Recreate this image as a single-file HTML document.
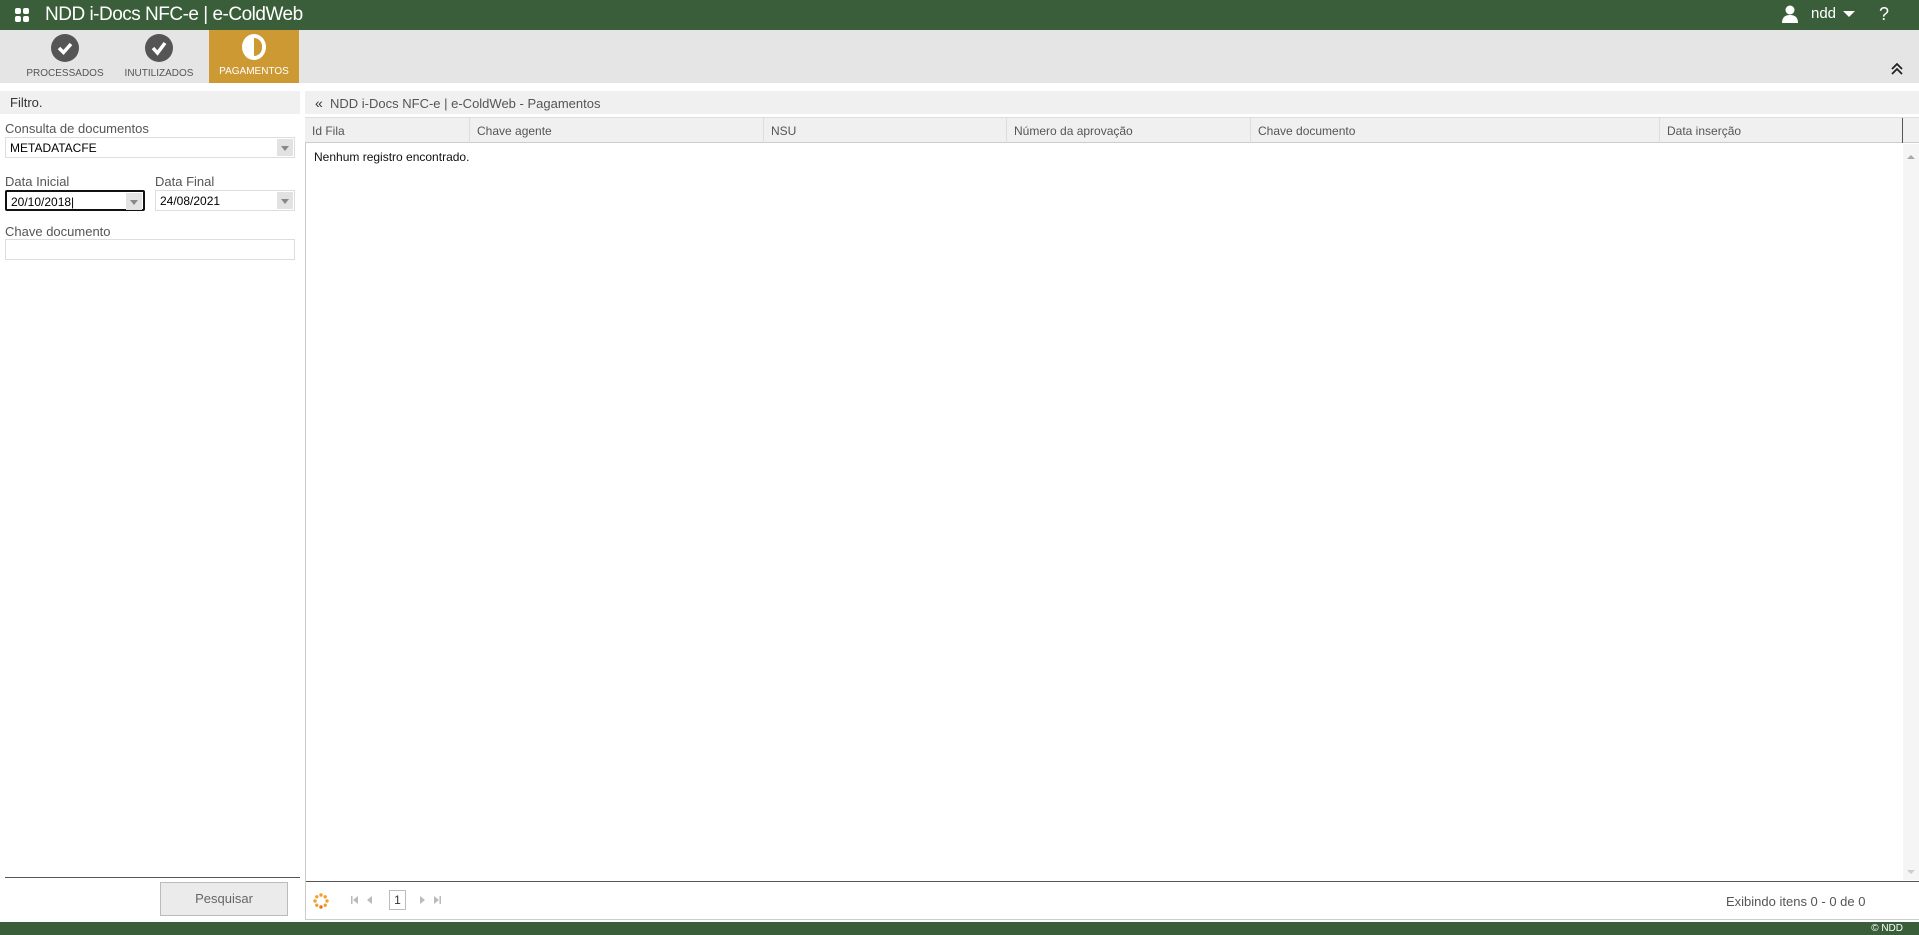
<!DOCTYPE html>
<html><head><meta charset="utf-8"><style>
*{box-sizing:border-box;margin:0;padding:0}
body{width:1919px;height:935px;overflow:hidden;font-family:"Liberation Sans",sans-serif;background:#fff;position:relative;font-size:12px;color:#333}
.a{position:absolute}
.hdr{left:0;top:0;width:1919px;height:30px;background:#3a5e39;color:#fff}
.tb{left:0;top:30px;width:1919px;height:53px;background:#e5e5e5}
.tab{top:0;height:53px;width:90px;text-align:center;font-size:10px;color:#555}
.ic{width:28px;height:28px;border-radius:50%;background:#555;margin:4px auto 6px;position:relative}
.lbl{font-size:13px;color:#555}
.inp{border:1px solid #ddd;height:21px;font-size:12px;color:#000;padding:3px 4px}
.dd{position:absolute;right:1px;top:1px;width:16px;height:17px;background:#e2e2e2}
.dd:after{content:"";position:absolute;left:4px;top:7px;border:4px solid transparent;border-top:5px solid #888}
.th{top:117px;height:26px;background:#f0f0f0;border-top:1px solid #ddd;border-bottom:1px solid #ccc}
.col{position:absolute;top:0;height:25px;border-left:1px solid #ddd;padding:6px 7px;font-size:12px;color:#555}
</style></head><body>
<div class="a hdr">
 <svg class="a" style="left:15px;top:8px" width="14" height="14"><rect x="0" y="0" width="6" height="6" rx="2" fill="#fff"/><rect x="8" y="0" width="6" height="6" rx="2" fill="#fff"/><rect x="0" y="8" width="6" height="6" rx="2" fill="#fff"/><rect x="8" y="8" width="6" height="6" rx="2" fill="#fff"/></svg>
 <div class="a" style="left:45px;top:4px;font-size:19px;letter-spacing:-0.5px">NDD i-Docs NFC-e | e-ColdWeb</div>
 <svg class="a" style="left:1781px;top:5px" width="18" height="18"><circle cx="9" cy="5" r="4.5" fill="#fff"/><path d="M1 18 Q1 10 9 10 Q17 10 17 18Z" fill="#fff"/></svg>
 <div class="a" style="left:1811px;top:5px;font-size:15px">ndd</div>
 <div class="a" style="left:1843px;top:11px;border:6px solid transparent;border-top:6px solid #fff"></div>
 <div class="a" style="left:1879px;top:4px;font-size:18px">?</div>
</div>
<div class="a tb">
 <div class="a tab" style="left:20px"><div class="ic"><svg width="28" height="28"><path d="M8 14 L12.5 18.5 L20 10" stroke="#fff" stroke-width="3.5" fill="none"/></svg></div>PROCESSADOS</div>
 <div class="a tab" style="left:114px"><div class="ic"><svg width="28" height="28"><path d="M8 14 L12.5 19 L20 9" stroke="#fff" stroke-width="3.5" fill="none"/></svg></div>INUTILIZADOS</div>
 <div class="a tab" style="left:209px;width:90px;background:#cc9933;color:#fff"><div class="ic" style="background:#fff;width:24px;height:26px;border-radius:50%"><div style="position:absolute;left:12px;top:4px;width:8px;height:18px;background:#cc9933;border-radius:0 9px 9px 0"></div></div>PAGAMENTOS</div>
 <svg class="a" style="left:1890px;top:32px" width="14" height="14"><path d="M2 7 L7 2 L12 7 M2 12 L7 7 L12 12" stroke="#222" stroke-width="1.8" fill="none"/></svg>
</div>
<div class="a" style="left:0;top:91px;width:300px;height:23px;background:#f0f0f0;padding:4px 10px;font-size:13px;color:#333">Filtro.</div>
<div class="a lbl" style="left:5px;top:121px">Consulta de documentos</div>
<div class="a inp" style="left:5px;top:137px;width:290px">METADATACFE<div class="dd"></div></div>
<div class="a lbl" style="left:5px;top:174px">Data Inicial</div>
<div class="a lbl" style="left:155px;top:174px">Data Final</div>
<div class="a inp" style="left:5px;top:190px;width:140px;border:2px solid #111;border-radius:2px">20/10/2018|<div class="dd"></div></div>
<div class="a inp" style="left:155px;top:190px;width:140px">24/08/2021<div class="dd"></div></div>
<div class="a lbl" style="left:5px;top:224px">Chave documento</div>
<div class="a inp" style="left:5px;top:239px;width:290px"></div>
<div class="a" style="left:5px;top:877px;width:295px;height:1px;background:#555"></div>
<div class="a" style="left:160px;top:882px;width:128px;height:34px;background:#ebebeb;border:1px solid #bbb;text-align:center;line-height:32px;font-size:13px;color:#666">Pesquisar</div>
<div class="a" style="left:305px;top:91px;width:1614px;height:23px;background:#f0f0f0;padding:4px 10px;font-size:13px;color:#555"><span style="font-size:14px;color:#333">«</span>&nbsp; NDD i-Docs NFC-e | e-ColdWeb - Pagamentos</div>
<div class="a" style="left:305px;top:117px;width:1px;height:803px;background:#ccc"></div>
<div class="a" style="left:305px;top:919px;width:1614px;height:1px;background:#ccc"></div>
<div class="a th" style="left:305px;width:1614px">
 <div class="col" style="left:0;border:0">Id Fila</div>
 <div class="col" style="left:164px">Chave agente</div>
 <div class="col" style="left:458px">NSU</div>
 <div class="col" style="left:701px">Número da aprovação</div>
 <div class="col" style="left:945px">Chave documento</div>
 <div class="col" style="left:1354px">Data inserção</div>
 <div class="col" style="left:1597px;border-left:1px solid #555"></div>
</div>
<div class="a" style="left:314px;top:150px;font-size:12px;color:#111">Nenhum registro encontrado.</div>
<div class="a" style="left:1903px;top:144px;width:16px;height:736px;background:#f5f5f5"></div>
<div class="a" style="left:1907px;top:151px;border:4px solid transparent;border-bottom:4px solid #aaa"></div>
<div class="a" style="left:1907px;top:870px;border:4px solid transparent;border-top:4px solid #ccc"></div>
<div class="a" style="left:306px;top:881px;width:1613px;height:1px;background:#555"></div>
<svg class="a" style="left:313px;top:893px" width="16" height="16"><g fill="#f0a030"><circle cx="8" cy="2" r="1.7"/><circle cx="12.2" cy="3.8" r="1.7"/><circle cx="14" cy="8" r="1.7"/><circle cx="12.2" cy="12.2" r="1.7"/><circle cx="8" cy="14" r="1.7" fill="#e87020"/><circle cx="3.8" cy="12.2" r="1.7"/><circle cx="2" cy="8" r="1.7"/><circle cx="3.8" cy="3.8" r="1.7"/></g></svg>
<svg class="a" style="left:350px;top:895px" width="100" height="10"><g fill="#bbb"><rect x="1" y="1" width="1.5" height="8"/><path d="M8 1 L3 5 L8 9Z"/><path d="M22 1 L17 5 L22 9Z"/><path d="M70 1 L75 5 L70 9Z"/><path d="M84 1 L89 5 L84 9Z"/><rect x="89.5" y="1" width="1.5" height="8"/></g></svg>
<div class="a" style="left:389px;top:890px;width:17px;height:20px;border:1px solid #bbb;text-align:center;font-size:12px;line-height:18px;color:#333">1</div>
<div class="a" style="left:1726px;top:894px;font-size:13px;color:#555">Exibindo itens 0 - 0 de 0</div>
<div class="a" style="left:0;top:922px;width:1919px;height:13px;background:#3a5e39;color:#fff;font-size:10px;text-align:right;padding-right:16px;line-height:13px">© NDD</div>
</body></html>
